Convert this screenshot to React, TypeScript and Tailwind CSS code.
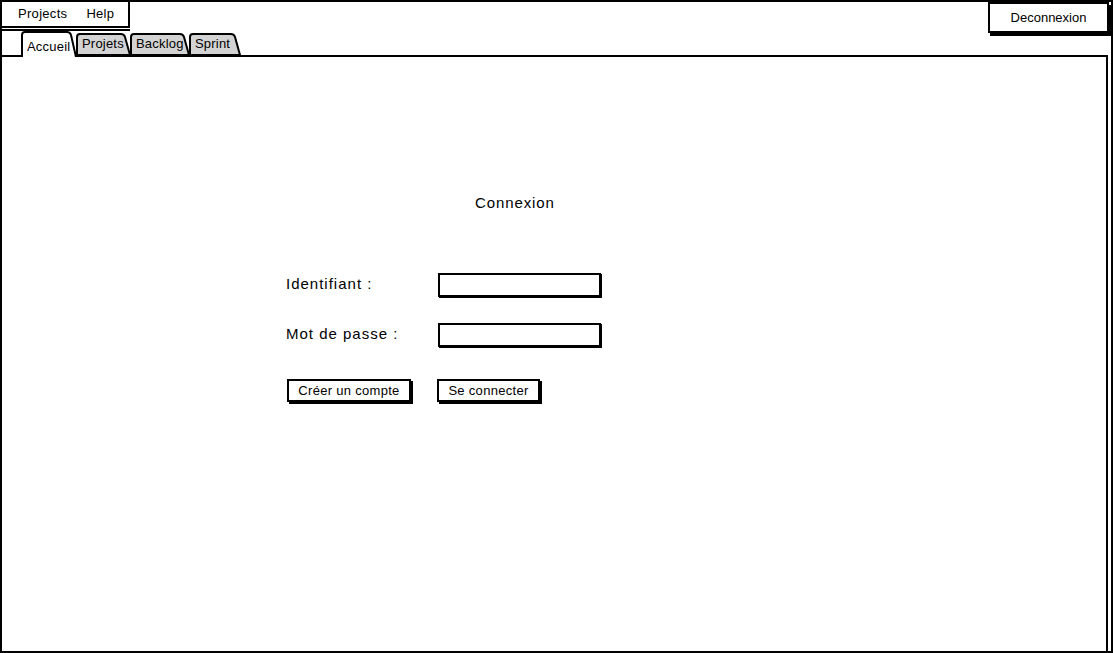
import React from 'react';

const font = "font-['Liberation_Sans',Arial,sans-serif]";

type TabDef = { label: string; w: number; cls: string; active?: boolean };

const tabs: TabDef[] = [
  { label: 'Accueil', w: 56, cls: 'w-[56px]', active: true },
  { label: 'Projets', w: 55, cls: 'w-[55px]' },
  { label: 'Backlog', w: 60, cls: 'w-[60px]' },
  { label: 'Sprint', w: 52, cls: 'w-[52px]' },
];

const Tab: React.FC<{ tab: TabDef }> = ({ tab }) => {
  const h = tab.active ? 26 : 22;
  const w = tab.w;
  const d = `M1 ${h} V4 Q1 1 4 1 H${w - 10} Q${w - 7} 1 ${w - 6} 4 L${w - 1} ${h}`;
  return (
    <div
      className={`relative -mr-[1px] ${tab.cls} ${
        tab.active ? 'z-10 h-[26px] -mb-[2px] order-first' : 'h-[22px]'
      }`}
    >
      <svg className="absolute inset-0" width={w} height={h}>
        <path
          d={tab.active ? d : d + ' Z'}
          fill={tab.active ? '#ffffff' : '#d3d3d3'}
          stroke="#000"
          strokeWidth={2}
          strokeLinejoin="round"
        />
      </svg>
      <span
        className={`relative block pl-[6px] text-[13px] tracking-[0.2px] leading-none ${
          tab.active ? 'pt-[9px]' : 'pt-[4px]'
        }`}
      >
        {tab.label}
      </span>
    </div>
  );
};

export default function App() {
  return (
    <div
      className={`w-[1113px] h-[653px] bg-white border-2 border-black flex flex-col text-black overflow-hidden ${font}`}
    >
      {/* top bar */}
      <div className="flex items-start h-[29px] shrink-0">
        <div className="flex items-center gap-[19px] w-[128px] h-[26px] pl-[16px] border-r-2 border-b-2 border-black text-[13px] tracking-[0.3px] shadow-[0_1px_0_0_#fff,0_3px_0_0_#000]">
          <span>Projects</span>
          <span>Help</span>
        </div>
        <div className="ml-auto mr-[2px] z-20 w-[121px] h-[31px] bg-white border-2 border-black shadow-[2px_3px_0_0_#000] flex items-center justify-center pt-[1px] text-[13px]">
          Deconnexion
        </div>
      </div>

      {/* tabs */}
      <div className="flex items-end h-[24px] pl-[19px] shrink-0">
        {tabs.map((t) => (
          <Tab key={t.label} tab={t} />
        ))}
      </div>

      {/* panel */}
      <div className="flex-1 mr-[3px] border-t-2 border-r-2 border-black">
        <div className="ml-[284px] pt-[137px] flex flex-col">
          <div className="ml-[189px] text-[15px] leading-[17px] tracking-[0.9px]">Connexion</div>

          <div className="flex items-center h-[24px] mt-[62px]">
            <span className="w-[152px] text-[15px] tracking-[1px] -mt-[1px]">Identifiant :</span>
            <div className="w-[163px] h-[24px] border-2 border-black shadow-[1px_1px_0_0_#000]" />
          </div>

          <div className="flex items-center h-[24px] mt-[26px]">
            <span className="w-[152px] text-[15px] tracking-[1px] -mt-[1px]">Mot de passe :</span>
            <div className="w-[163px] h-[24px] border-2 border-black shadow-[1px_1px_0_0_#000]" />
          </div>

          <div className="flex items-start mt-[32px]">
            <div className="ml-[1px] w-[124px] h-[23px] border-2 border-black shadow-[2px_2px_0_0_#000] flex items-center justify-center text-[13px] tracking-[0.3px]">
              Créer un compte
            </div>
            <div className="ml-[26px] w-[103px] h-[23px] border-2 border-black shadow-[2px_2px_0_0_#000] flex items-center justify-center text-[13px] tracking-[0.3px]">
              Se connecter
            </div>
          </div>
        </div>
      </div>
    </div>
  );
}
